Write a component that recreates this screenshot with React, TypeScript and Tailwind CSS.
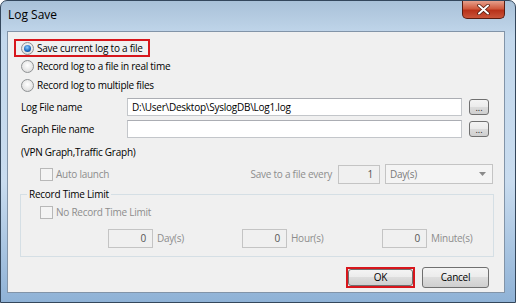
import React from 'react';

const font = "font-['Open_Sans',sans-serif]";
const txt = 'whitespace-nowrap text-[10px] tracking-[-0.25px]';

const Radio: React.FC<{ checked?: boolean }> = ({ checked }) => (
  <span className="flex h-[13px] w-[13px] shrink-0 items-center justify-center rounded-full border border-[#8f9294] bg-[radial-gradient(circle_at_50%_40%,#ffffff,#e6e6e6_60%,#cfcfcf)]">
    {checked && (
      <span className="h-[7px] w-[7px] rounded-full bg-[radial-gradient(circle_at_45%_35%,#8fd0ff,#1f6dc2_55%,#0b2f6d)]" />
    )}
  </span>
);

const Checkbox: React.FC = () => (
  <span className="h-[13px] w-[13px] shrink-0 border border-[#b8b8b8] bg-[#f4f4f4]" />
);

const TextBox: React.FC<{ value?: string; className?: string }> = ({ value, className }) => (
  <div
    className={`flex h-[18px] items-center border border-[#c3c6ca] border-t-[#abadb3] bg-white pl-[4px] text-black ${txt} ${className ?? ''}`}
  >
    {value}
  </div>
);

const NumBox: React.FC<{ value: string; className?: string }> = ({ value, className }) => (
  <div
    className={`flex h-[19px] shrink-0 items-center justify-end border border-[#c4c4c4] bg-[#f0f0f0] pr-[6px] text-[#555] ${txt} ${className ?? ''}`}
  >
    {value}
  </div>
);

const Browse: React.FC = () => (
  <div className="ml-[7px] flex h-[16px] w-[20px] items-end justify-center rounded-[3px] border border-[#707070] bg-[linear-gradient(to_bottom,#f4f4f4,#ebebeb_50%,#dcdcdc_50%,#cfcfcf)] pb-[2px] text-[9px] leading-[8px] text-[#222]">
    ...
  </div>
);

const WinButton: React.FC<{ label: string; className?: string }> = ({ label, className }) => (
  <div
    className={`flex items-center justify-center rounded-[3px] border border-[#707070] bg-[linear-gradient(to_bottom,#f4f4f4,#ebebeb_50%,#dddddd_50%,#cfcfcf)] text-black ${txt} ${className ?? ''}`}
  >
    {label}
  </div>
);

const Unit: React.FC<{ value: string; label: string; className?: string }> = ({ value, label, className }) => (
  <div className={`flex shrink-0 items-center ${className ?? ''}`}>
    <NumBox value={value} className="w-[45px]" />
    <span className="ml-[4px]">{label}</span>
  </div>
);

export default function App() {
  return (
    <div className={`h-[303px] w-[516px] bg-white ${font}`}>
      <div className="flex h-[303px] w-[516px] flex-col rounded-t-[7px] border border-[#34475c] bg-[linear-gradient(to_bottom,#a9c1d8,#c3d8ec_12%,#c9dcef_60%,#8fb2d6)]">
        {/* title bar */}
        <div className="flex h-[30px] items-start">
          <span className="pl-[7px] pt-[5px] text-[12px] text-black">Log Save</span>
          <div className="ml-auto mr-[10px] flex h-[18px] w-[43px] items-center justify-center rounded-b-[5px] border border-t-0 border-[#5a1c10] bg-[linear-gradient(to_bottom,#e6a08c,#d05a3e_45%,#b8321a_55%,#c9543a)]">
            <svg width="13" height="11" viewBox="0 0 13 11">
              <path d="M2 1.5 L11 9.5 M11 1.5 L2 9.5" stroke="#4a1508" strokeWidth="3.4" strokeLinecap="round" />
              <path d="M2 1.5 L11 9.5 M11 1.5 L2 9.5" stroke="#ffffff" strokeWidth="2" strokeLinecap="round" />
            </svg>
          </div>
        </div>

        {/* client area */}
        <div className="ml-[6px] mr-[10px] h-[262px] border border-[#8294a8] bg-[#f0f0f0]">
          <div className="flex flex-col">
            <div className={`ml-[6px] mt-[7px] flex h-[18px] w-[136px] items-center gap-[3px] border-2 border-[#d7161c] pl-[5px] text-black ${txt}`}>
              <Radio checked />
              <span>Save current log to a file</span>
            </div>
            <div className={`ml-[13px] flex h-[19px] items-center gap-[3px] text-black ${txt}`}>
              <Radio />
              <span>Record log to a file in real time</span>
            </div>
            <div className={`ml-[13px] flex h-[19px] items-center gap-[3px] text-black ${txt}`}>
              <Radio />
              <span>Record log to multiple files</span>
            </div>

            <div className="mt-[3px] flex h-[18px] items-center">
              <span className={`w-[119px] pl-[13px] text-black ${txt}`}>Log File name</span>
              <TextBox value="D:\User\Desktop\SyslogDB\Log1.log" className="w-[335px]" />
              <Browse />
            </div>
            <div className="mt-[4px] flex h-[18px] items-center">
              <span className={`w-[119px] pl-[13px] text-black ${txt}`}>Graph File name</span>
              <TextBox className="w-[335px]" />
              <Browse />
            </div>
            <div className={`mt-[7px] h-[14px] pl-[13px] leading-[14px] text-black ${txt}`}>
              (VPN Graph,Traffic Graph)
            </div>

            <div className="mt-[5px] flex h-[20px] items-center">
              <div className={`ml-[32px] flex items-center gap-[3px] text-[#8d8d8d] ${txt}`}>
                <Checkbox />
                <span>Auto launch</span>
              </div>
              <span className={`ml-auto text-[#8d8d8d] ${txt}`}>Save to a file every</span>
              <NumBox value="1" className="ml-[6px] w-[42px]" />
              <div className={`ml-[5px] mr-[11px] flex h-[20px] w-[108px] items-center justify-between border border-[#c4c4c4] bg-[#f4f4f4] pl-[4px] pr-[6px] text-[#7a7a7a] ${txt}`}>
                <span>Day(s)</span>
                <svg width="7" height="4" viewBox="0 0 7 4">
                  <path d="M0 0 L7 0 L3.5 4 Z" fill="#8a8a8a" />
                </svg>
              </div>
            </div>

            <fieldset className="ml-[12px] mt-[3px] h-[70px] w-[474px] border border-[#d5dfe5]">
              <legend className={`ml-[6px] px-[2px] leading-[14px] text-black ${txt}`}>Record Time Limit</legend>
              <div className={`ml-[19px] mt-[4px] flex h-[14px] items-center gap-[3px] text-[#8d8d8d] ${txt}`}>
                <Checkbox />
                <span>No Record Time Limit</span>
              </div>
              <div className={`mt-[10px] flex items-center text-[#8d8d8d] ${txt}`}>
                <Unit value="0" label="Day(s)" className="ml-[87px] w-[134px]" />
                <Unit value="0" label="Hour(s)" className="w-[140px]" />
                <Unit value="0" label="Minute(s)" />
              </div>
            </fieldset>

            <div className="mt-[10px] flex justify-end gap-[7px] pr-[15px]">
              <div className="h-[21px] w-[69px] border-2 border-[#d7161c]">
                <WinButton label="OK" className="h-full w-full" />
              </div>
              <WinButton label="Cancel" className="h-[21px] w-[67px]" />
            </div>
          </div>
        </div>
      </div>
    </div>
  );
}
